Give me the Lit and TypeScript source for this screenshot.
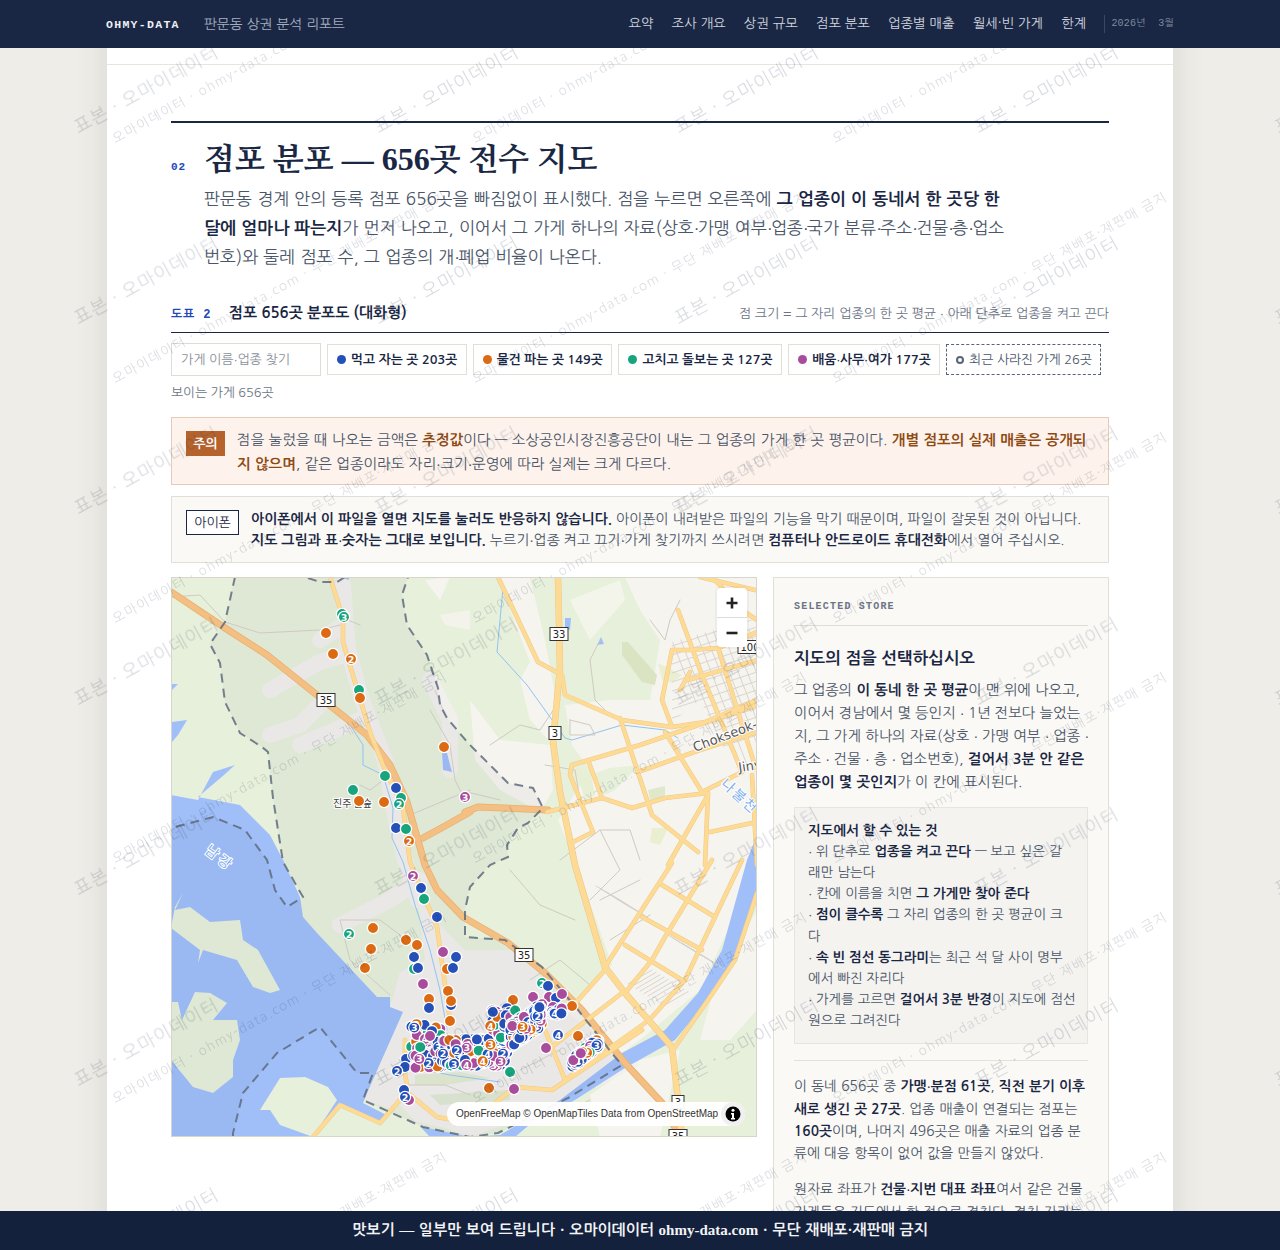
import { LitElement, html, css, svg } from "lit";
import { customElement } from "lit/decorators.js";

type P = number[];
const d = (p: P) => {
  let s = "";
  for (let i = 0; i < p.length; i += 2) s += (i ? "L" : "M") + p[i] + " " + p[i + 1] + " ";
  return s;
};

const boundaryFill: P = [235,577,225,622,210,644,220,663,225,702,240,733,262,747,268,752,273,798,283,862,303,897,287,907,275,890,267,860,245,830,213,817,171,828,171,1137,233,1137,233,1133,243,1093,277,1053,320,1027,357,1073,373,1073,363,1100,423,1127,470,1137,498,1133,568,1098,622,1065,615,1057,578,1010,542,967,505,940,465,937,465,910,470,887,490,865,508,857,507,845,518,828,528,823,543,808,533,788,518,785,508,783,468,743,447,718,440,705,438,688,427,655,407,625,402,595,408,577];
const boundaryLines: P[] = [
  [235,577,225,622,210,644,220,663,225,702,240,733,262,747,268,752,273,798,283,862,303,897,287,907,275,890,267,860,245,830,213,817,171,828],
  [233,1137,233,1133,243,1093,277,1053,320,1027,357,1073,373,1073,363,1100,423,1127,470,1137,498,1133,568,1098,622,1065,615,1057,578,1010,542,967,505,940,465,937,465,910,470,887,490,865,508,857,507,845,518,828,528,823,543,808,533,788,518,785,508,783,468,743,447,718,440,705,438,688,427,655,407,625,402,595,408,577],
  [308,578,320,582,337,582,345,577],
];
const water: P[] = [
  [171,795,198,800,213,772,235,765,224,775,198,797,240,805,270,835,283,860,300,897,303,917,317,933,333,950,377,997,390,997,390,1007,403,1012,367,1093,363,1103,400,1122,470,1137,171,1137],
  [470,1137,500,1135,560,1100,622,1053,665,1030,698,993,722,950,747,860,757,835,757,895,735,960,708,1000,675,1040,625,1068,575,1100,535,1120,515,1137],
  [172,684,178,684,172,690],[172,722,187,720,178,735,172,742],
  [565,618,571,618,570,630,565,628],[597,645,601,637,604,644],[442,752,447,753,452,772,443,770],
  [342,577,350,577,348,580],
];
const islands: P[] = [
  [171,928,175,907,183,893,175,910,190,907,210,922,240,920,243,940,258,950,280,990,270,993,253,987,237,960,203,950,198,963,200,950,171,928],
  [171,1002,178,1002,182,1020,195,992,210,993,227,1003,213,1020,237,1020,240,1040,233,1060,233,1077,213,1093,193,1087,171,1060],
  [260,1110,280,1078,305,1077,328,1087,337,1100,313,1137,280,1125,270,1110],
  [313,1137,340,1105,380,1123,400,1105,430,1137],
];
const urbanLight: P[] = [
  [625,577,757,577,757,850,735,915,700,990,640,1040,590,1075,552,1088,540,1040,612,965,575,860,558,820,590,770,572,745,565,705,610,700,650,700,660,640,640,610],
  [498,578,530,578,545,640,556,700,553,745,530,720,520,680,530,662],
  [470,700,500,740,550,745,553,790,540,812,500,790,475,760],
  [590,1095,640,1060,680,1050,660,1137,600,1137],
  [715,985,757,910,757,1010,730,1040,700,1040],
];
const urbanGrey: P[] = [
  [392,1000,400,972,425,960,418,900,440,925,465,950,520,950,570,1015,640,1065,560,1105,470,1137,410,1115,363,1100],
];
const greyWide: P[] = [
  [343,585,348,650,362,700,385,760,396,820,405,860,418,900],
  [320,640,343,625],[270,690,320,662,345,655],[270,735,300,725,325,700],[360,720,300,745],
  [450,770,450,720,430,680],[420,880,390,900,340,925],
  [410,1112,470,1125],
];
const motor: P[] = [
  [171,592,225,628,267,655,317,695,367,735,390,765,407,802,425,865,437,890,463,917,508,943,545,973,582,1010,625,1063,662,1103,680,1137],
  [470,812,445,826,423,838],[465,812,478,807,548,810],
];
const trunk: P[] = [
  [498,577,538,662,562,675,565,695,622,720,672,727,705,722,757,700],
  [330,577,343,618,343,642,370,732,383,765,403,808,410,862,437,927,450,1020],
  [405,1040,405,1073,408,1093,437,1117,470,1123,515,1087,552,1090,642,1030],
  [313,1137,340,1105,380,1123,400,1100],
  [572,765,640,745,757,705],[638,772,700,750,757,732],[620,718,652,815,698,852],[665,732,702,792,742,772],
  [572,765,570,775,593,832,573,842],[588,760,602,798],[547,812,602,798,632,808,665,798,708,793],
  [708,793,705,865],[710,832,752,823],[708,795,668,865],[752,775,757,865],[678,610,702,675,742,772],[718,648,757,772],
  [672,650,662,700,672,727],[672,650,690,650,718,648,757,632],[688,680,757,660],[690,672,680,690],
  [672,863,605,967],[712,860,665,937,652,960,625,993],[742,860,715,917,685,980,652,1017],[662,885,715,917],[642,917,702,950],[625,945,682,980],
  [605,970,572,1007],[622,993,548,1050],[645,1023,565,1080],[545,1030,565,1080],[757,893,735,960,708,1000,675,1047],
  [700,577,755,590],[712,577,745,612,757,620],
];
const minor: P[] = [
  [172,597,200,595,225,622,260,633,320,630,340,625],[343,618,360,625],[445,715,435,690],[430,710,450,745,455,780,465,800],
  [390,775,370,790,360,785],[467,792,500,800],[410,815,470,790],[490,745,520,725,540,730,560,700],
  [545,765,575,770,580,800],[680,600,670,620,665,640,650,620],[600,640,590,660,595,700,610,715],
  [570,720,590,725,595,735,570,735,570,720],[560,860,600,830,620,870,590,900],[510,870,540,905,575,920],
  [600,900,640,880],[610,940,650,915],[590,985,560,960,530,980],[420,950,380,920,340,920,350,960,390,995],
  [520,1070,560,1050],[500,1110,540,1125,590,1100],[400,1085,445,1085,470,1095],[600,830,630,830,640,860],
];
const streams: P[] = [
  [503,588,497,652,527,685,565,738,572,740,622,725,665,730,678,738],
  [350,725,363,745,363,765,383,775,393,808,392,838,403,862,415,905,430,950,440,990,447,1030],
  [410,1050,425,1070,450,1075,500,1082],
];

const shields: [number, number, string][] = [[326,700,"35"],[559,634,"33"],[555,733,"3"],[524,955,"35"],[750,647,"100"],[678,1102,"3"],[678,1136,"35"]];

type Dot = [number, number, string, string?];
const COL: Record<string, string> = { b: "#2450b8", o: "#dc6a12", g: "#18a47c", p: "#a94c9c" };
const singles: Dot[] = [
  [342,614,"g"],[344,617,"g","3"],[326,633,"o"],[333,654,"o"],[351,659,"o","2"],[359,690,"g"],[360,698,"o"],[444,747,"o"],[385,776,"g"],[396,788,"b"],[401,798,"g"],[399,804,"g","2"],[353,790,"g"],[359,801,"o"],[384,802,"o"],[465,797,"p","3"],[396,828,"b"],[406,829,"g"],[409,841,"o","2"],
  [413,876,"p","2"],[421,888,"b"],[424,899,"g"],[437,917,"b"],[349,934,"g","2"],[373,928,"o"],[371,949,"o"],[365,968,"o"],[406,940,"o"],[417,945,"o"],[443,952,"p"],[456,957,"b"],[414,957,"b"],[447,969,"o"],[453,968,"b"],[414,969,"g"],[418,968,"b"],[423,984,"p"],[448,991,"o"],[451,1005,"b"],[451,1001,"o"],[429,999,"o"],[429,1008,"b"],[450,1021,"o"],
  [542,983,"g","2"],[548,986,"b"],[533,997,"p"],[513,1000,"o"],[549,997,"p"],[556,998,"b"],[562,994,"p"],[553,1007,"p"],[572,1006,"o"],[558,1035,"b","4"],[578,1036,"o"],[546,1048,"p"],[510,1072,"g"],[489,1088,"o"],[514,1089,"p"],
  [406,1059,"b"],[405,1067,"b"],[397,1071,"b","2"],[409,1100,"p"],[404,1090,"b"],[405,1097,"b","2"],
];
const keys = ["b","o","g","p","b","p","b"];
function cluster(seed: number, n: number, lab: number, f: (a: number, b: number) => [number, number]): Dot[] {
  let s = seed;
  const r = () => {
    s = (s + 0x6d2b79f5) | 0;
    let t = Math.imul(s ^ (s >>> 15), 1 | s);
    t = (t + Math.imul(t ^ (t >>> 7), 61 | t)) ^ t;
    return ((t ^ (t >>> 14)) >>> 0) / 4294967296;
  };
  const out: Dot[] = [];
  for (let i = 0; i < n; i++) {
    const [x, y] = f(r(), r());
    const k = keys[Math.floor(r() * keys.length)];
    const l = r() < lab ? String(2 + Math.floor(r() * 3)) : undefined;
    out.push([Math.round(x * 10) / 10, Math.round(y * 10) / 10, k, l]);
  }
  return out;
}
const dots: Dot[] = [
  ...singles,
  ...cluster(7, 60, 0.35, (a, b) => [411 + a * 32, 1024 + b * 44]),
  ...cluster(13, 120, 0.5, (a, b) => [443 + a * 66, 1038 + b * 28]),
  ...cluster(29, 40, 0.4, (a, b) => [490 + a * 26, 1008 + b * 30]),
  ...cluster(41, 220, 0.85, (a, b) => [510 + a * 32, 1036 - a * 22 + (b - 0.5) * 24]),
  ...cluster(53, 12, 0.5, (a, b) => [551 + a * 12, 1008 + b * 7]),
  ...cluster(61, 90, 0.7, (a, b) => [572 + a * 27, 1063 - a * 21 + (b - 0.5) * 11]),
];

function hatch(): P[] {
  const out: P[] = [];
  for (let i = 0; i < 14; i++) { const o = i * 9; out.push([660, 650 + o, 757, 618 + o]); }
  for (let i = 0; i < 12; i++) { const o = i * 9; out.push([668 + o, 630, 722 + o, 770]); }
  return out;
}
function hatch2(): P[] {
  const out: P[] = [];
  for (let i = 0; i < 8; i++) out.push([596 + i * 4, 886 + i * 2.5, 620 + i * 4, 900 + i * 2.5]);
  for (let i = 0; i < 9; i++) out.push([668 + i * 3.6, 935 + i * 2.2, 695 + i * 3.6, 951 + i * 2.2]);
  for (let i = 0; i < 10; i++) out.push([628 + i * 4, 992 + i * 2.4 - 8, 652 + i * 4, 978 + i * 2.4 - 8]);
  return out;
}

@customElement("store-map")
class StoreMap extends LitElement {
  static styles = css`
    :host { display: block; position: relative; width: 586px; height: 560px; box-sizing: border-box; border: 1px solid #d8d5cb; overflow: hidden; flex: none; word-spacing: 0; }
    svg.map { display: block; width: 584px; height: 558px; }
    .shield { fill: #fff; stroke: #333; stroke-width: 1; }
    .shield-t { font: 10px "DejaVu Sans", sans-serif; fill: #222; text-anchor: middle; dominant-baseline: central; }
    .lbl { font: 10px "Nanum Gothic", "Noto Sans CJK KR", sans-serif; fill: #444; paint-order: stroke; stroke: #fff; stroke-width: 2px; }
    .lbl-en { font: 13px "DejaVu Sans", sans-serif; fill: #555; paint-order: stroke; stroke: #fff; stroke-width: 2px; }
    .lbl-w { font: 14px "Nanum Gothic", "Noto Sans CJK KR", sans-serif; fill: #7fb0f0; paint-order: stroke; stroke: #fff; stroke-width: 2px; }
    .num { font: 700 9.500px "DejaVu Sans", sans-serif; fill: #fff; text-anchor: middle; dominant-baseline: central; }
    .zoom { position: absolute; top: 10px; right: 9px; width: 30px; height: 59px; background: #fff; border-radius: 4px; box-shadow: 0 0 0 2px rgba(0,0,0,.03); display: flex; flex-direction: column; }
    .zoom div { flex: 1; display: flex; align-items: center; justify-content: center; }
    .zoom div + div { border-top: 1px solid #ddd; }
    .attr { position: absolute; right: 11px; bottom: 10px; height: 24px; width: 298px; box-sizing: border-box; padding: 0 38px 0 9px; background: rgba(255,255,255,.95); border-radius: 12px; font: 10px/24px "Liberation Sans", sans-serif; color: #333; white-space: nowrap; }
    .info { position: absolute; right: 0; top: 0; width: 24px; height: 24px; border-radius: 50%; background: #f0f0f0; display: flex; align-items: center; justify-content: center; }
  `;
  render() {
    const line = (p: P, c: string, w: number) => svg`<path d=${d(p)} fill="none" stroke=${c} stroke-width=${w} stroke-linejoin="round" stroke-linecap="round"/>`;
    const fill = (p: P, c: string) => svg`<path d=${d(p) + "Z"} fill=${c}/>`;
    const main33: P = [558,577,560,668,553,742,560,792,575,865,605,967,625,993,672,1047,678,1100,682,1137];
    return html`
      <svg class="map" viewBox="172 578 584 558">
        <defs><clipPath id="dt"><path d="M672 642 L757 618 L757 772 L737 775 L700 700 L672 722 Z"/></clipPath></defs>
        <rect x="171" y="577" width="586" height="560" fill="#e7f0db"/>
        ${urbanLight.map((p) => fill(p, "#f6f4ef"))}
        ${fill([622,642,628,642,657,675,655,685,642,682,622,655], "#dbe4c2")}
        ${fill([658,663,682,675,672,683,662,680], "#e9efd0")}
        ${fill([648,790,665,786,665,798,650,800], "#e0e8cb")}
        ${fill([652,828,668,828,660,845,650,842], "#e9efd0")}
        ${fill([575,768,590,770,595,795,585,800], "#e7efd4")}
        ${fill([590,775,610,768,640,765,615,790,605,795], "#e7f0db")}
        ${fill([425,580,450,577,440,600], "#f6f4ef")}
        ${fill([440,615,470,610,470,630,445,625], "#f3f3ec")}
        ${fill([570,600,620,580,625,600,590,640], "#f3f5ea")}
        ${urbanGrey.map((p) => fill(p, "#f2f0ed"))}
        ${greyWide.map((p) => line(p, "#f2f0ed", 16))}
        ${water.map((p) => fill(p, "#a0bff9"))}
        ${islands.map((p) => fill(p, "#e7f0db"))}
        ${fill([430,1095,510,1090,510,1100,440,1105], "#dfe9d3")}
        ${fill([415,1075,460,1072,490,1078,445,1085,415,1085], "#e3ebd2")}
        <path d=${d(boundaryFill) + "Z"} fill="#1a2744" fill-opacity=".04"/>
        ${streams.map((p) => line(p, "#8fc3f2", 1))}
        ${minor.map((p) => line(p, "#cfcac3", 1))}
        <g clip-path="url(#dt)">${hatch().map((p) => line(p, "#d6d1c9", 0.9))}</g>
        ${hatch2().map((p) => line(p, "#d6d1c9", 0.9))}
        ${motor.map((p) => line(p, "#e8b070", 7))}
        ${motor.map((p) => line(p, "#f4bf82", 5.5))}
        ${line(main33, "#efc582", 6.5)}
        ${trunk.map((p) => line(p, "#f0c888", 4.6))}
        ${trunk.map((p) => line(p, "#fedb95", 3.6))}
        ${line(main33, "#fedb95", 5.5)}
        ${boundaryLines.map((p) => svg`<path d=${d(p)} fill="none" stroke="#5f6b7e" stroke-width="2" stroke-dasharray="9 6" stroke-opacity=".85"/>`)}
        <text class="lbl-w" x="204" y="852" transform="rotate(38 204 852)" letter-spacing="3">남강</text>
        <text class="lbl-w" x="720" y="785" transform="rotate(42 720 785)" font-size="13" letter-spacing="2">나불천</text>
        <text class="lbl" x="333" y="807">진주 솔숲 </text>
        <text class="lbl-en" x="695" y="752" transform="rotate(-21 695 752)">Chokseok-ro</text>
        <text class="lbl-en" x="739" y="772" transform="rotate(-8 739 772)">Jiny</text>
        ${shields.map(([x, y, t]) => {
          const w = t.length > 2 ? 24 : t.length > 1 ? 18 : 12;
          return svg`<rect class="shield" x=${x - w / 2} y=${y - 6.5} width=${w} height="13"/><text class="shield-t" x=${x} y=${y}>${t}</text>`;
        })}
        ${dots.map(([x, y, k, l]) => svg`<circle cx=${x} cy=${y} r="5.6" fill=${COL[k]} stroke="#fff" stroke-width="1.3"/>${l ? svg`<text class="num" x=${x} y=${y}>${l}</text>` : ""}`)}
      </svg>
      <div class="zoom">
        <div><svg width="14" height="14" viewBox="0 0 14 14"><path d="M1.5 7h11M7 1.500v11" stroke="#222" stroke-width="2.600"/></svg></div>
        <div><svg width="14" height="14" viewBox="0 0 14 14"><path d="M1.500 7h11" stroke="#222" stroke-width="2.600"/></svg></div>
      </div>
      <div class="attr">OpenFreeMap © OpenMapTiles Data from OpenStreetMap
        <span class="info"><svg width="16" height="16" viewBox="0 0 16 16"><circle cx="8" cy="8" r="7.500" fill="#000"/><circle cx="8" cy="4.300" r="1.500" fill="#fff"/><path d="M6 7h3v5h1v1.500H6V12h1V8.500H6z" fill="#fff"/></svg></span>
      </div>
    `;
  }
}

const BODY = css`"Liberation Serif", "Nanum Gothic", "NanumGothic", "Noto Sans CJK KR", serif`;
const SANS = css`"Nanum Gothic", "NanumGothic", "Liberation Sans", "Noto Sans CJK KR", sans-serif`;
const SERIF = css`"Liberation Serif", "Nanum Myeongjo", "NanumMyeongjo", "Noto Serif CJK KR", serif`;
const MONO = css`"Liberation Mono", "Nanum Gothic", "NanumGothic", "Noto Sans CJK KR", monospace`;

const M = html`<i class="m">·</i>`;

@customElement("app-root")
class AppRoot extends LitElement {
  static styles = css`
    :host { display: block; height: 1250px; overflow: hidden; background: #eeede8; font-family: ${SANS}; color: #4a5568; }
    i.m { font-family: "Liberation Sans", sans-serif; font-weight: 400; font-style: normal; letter-spacing: -0.500px; }
    .nav { position: fixed; left: 0; right: 0; top: 0; height: 48px; background: #1a2744; z-index: 10; display: flex; justify-content: center; }
    .nav-in { width: 1068px; display: flex; align-items: center; }
    .brand { font: 700 11.500px ${MONO}; letter-spacing: 1.300px; color: #eef0f4; margin-right: 24px; }
    .sub { font-size: 13.800px; color: #a6afc0; }
    .links { margin-left: auto; display: flex; gap: 18px; font-size: 13.400px; color: #d0d5df; }
    .date { margin-left: 18px; padding-left: 6px; border-left: 1px solid #3a4763; font: 10px/18px ${MONO}; color: #7f8aa0; letter-spacing: 0.200px; white-space: pre; }
    .foot { position: fixed; left: 0; right: 0; bottom: 0; height: 39px; background: #14213d; z-index: 10; color: #f2f3f5; display: flex; align-items: center; justify-content: center; font: 700 15px ${BODY}; word-spacing: 0.900px; }
    .sheet { width: 1066px; margin: 0 auto; background: #fff; box-shadow: 0 0 30px rgba(60,55,40,.12); box-sizing: border-box; padding: 48px 0 80px; }
    .stub { height: 16px; border-bottom: 1px solid #e8e5de; }
    .body { padding: 56px 64px 0; }
    .rule { height: 2px; background: #1a2744; }
    .h { display: flex; align-items: baseline; margin-top: 14px; }
    .no { width: 33px; font: 700 11px ${MONO}; color: #2348b8; letter-spacing: 1px; }
    h2 { margin: 0; font: 800 32px/44px ${SERIF}; color: #1a2744; }
    .lede { margin: 4px 0 0 33px; font-size: 17px; line-height: 28px; white-space: nowrap; word-spacing: 0.450px; }
    .lede i.m { letter-spacing: -1.600px; }
    b { color: #1a2744; font-weight: 700; }
    .fig { display: flex; align-items: baseline; margin-top: 33px; padding-bottom: 10px; border-bottom: 1px solid #1a2744; }
    .fig-no { width: 58px; font: 700 12px ${MONO}; color: #2348b8; letter-spacing: 0.800px; }
    .fig-t { font-size: 15px; font-weight: 700; color: #1a2744; }
    .fig-n { margin-left: auto; font-size: 13px; color: #6b7484; word-spacing: 0.100px; }
    .tools { display: flex; gap: 6px; align-items: center; margin-top: 10px; }
    .search { width: 150px; flex: none; height: 33px; box-sizing: border-box; border: 1px solid #dfdcd3; padding: 0 9px; font-size: 13px; line-height: 31px; color: #8a8f99; background: #fff; }
    .chip { height: 31px; box-sizing: border-box; border: 1px solid #e2dfd6; display: flex; align-items: center; padding: 0 8.500px 0 9px; gap: 5px; font-size: 12.800px; font-weight: 600; color: #1a2744; background: #fff; white-space: nowrap; flex: none; }
    .chip.dash { border: 1px dashed #5a6478; font-weight: 400; color: #4a5568; }
    .dot { width: 9px; height: 9px; border-radius: 50%; flex: none; }
    .ring { width: 8px; height: 8px; border-radius: 50%; box-sizing: border-box; border: 2px solid #5a6478; }
    .count { margin-top: 9px; font-size: 12.800px; color: #6b7484; line-height: 16px; }
    .note { display: flex; box-sizing: border-box; white-space: nowrap; }
    .warn { margin-top: 16px; height: 68px; padding: 11px 14px; gap: 12px; background: #fdf3ec; border: 1px solid #e6ccb6; font-size: 14.500px; line-height: 23.500px; word-spacing: 0.300px; }
    .warn b { color: #8f4a14; }
    .warn .badge { background: #b5622c; color: #fff; font-weight: 700; font-size: 13px; width: 39px; height: 25px; line-height: 25px; text-align: center; flex: none; margin-top: 2px; }
    .ios { margin-top: 11px; height: 67px; padding: 12px 14px; gap: 12px; background: #faf9f5; border: 1px solid #e2dfd6; font-size: 14px; line-height: 21px; word-spacing: 0.050px; }
    .ios .badge { background: #fff; color: #1a2744; border: 1px solid #1a2744; font-size: 13px; width: 53px; height: 25px; box-sizing: border-box; line-height: 23px; text-align: center; flex: none; margin-top: 1px; }
    .cols { display: flex; gap: 16px; margin-top: 14px; align-items: flex-start; }
    .panel { width: 336px; box-sizing: border-box; padding: 21px 20px; background: #faf9f5; border: 1px solid #e2dfd6; flex: none; white-space: nowrap; }
    .eyebrow { font: 700 10px/16px "Liberation Mono", monospace; letter-spacing: 1.200px; color: #6b7484; padding-bottom: 10px; border-bottom: 1px solid #e0ddd4; }
    .panel h3 { margin: 20px 0 0; font-size: 16.600px; line-height: 24px; color: #1a2744; font-weight: 700; }
    .panel p { margin: 9px 0 0; font-size: 14.400px; line-height: 23px; word-spacing: 0.200px; }
    .box { margin-top: 13px; padding: 11.500px 13px; background: #f4f3f0; border: 1px solid #e8e5de; font-size: 13.500px; line-height: 21.200px; word-spacing: 0.100px; }
    .box .l { display: block; }
    hr { border: 0; border-top: 1px solid #e4e1d8; margin: 16px 0 0; }
    .panel p.sm { font-size: 13.800px; line-height: 22px; margin-top: 14px; word-spacing: 0.300px; }
    .wm { position: fixed; inset: 0; z-index: 5; pointer-events: none; overflow: hidden; }
    .wm span { position: absolute; white-space: nowrap; transform: translate(-50%, -50%) rotate(-29deg); color: rgba(26,39,68,.16); }
    .wm .big { font-size: 18px; letter-spacing: 1px; }
    .wm .small { font-size: 13px; letter-spacing: 1.500px; }
  `;
  render() {
    const big: [number, number][] = [];
    for (let j = -1; j < 7; j++) for (let i = 0; i < 5; i++) big.push([147 + 300 * i, 90 + 190.500 * j]);
    const small: [number, number][] = [];
    for (let j = 0; j < 7; j++) for (let i = 0; i < 3; i++) small.push([280 + 360 * i, 48 + 240 * j]);
    return html`
      <div class="nav"><div class="nav-in">
        <span class="brand">OHMY-DATA</span><span class="sub">판문동 상권 분석 리포트</span>
        <div class="links"><span>요약</span><span>조사 개요</span><span>상권 규모</span><span>점포 분포</span><span>업종별 매출</span><span>월세·빈 가게</span><span>한계</span></div>
        <span class="date">2026년  3월</span>
      </div></div>
      <div class="sheet">
        <div class="stub"></div>
        <div class="body">
          <div class="rule"></div>
          <div class="h"><span class="no">02</span><h2>점포 분포 — 656곳 전수 지도</h2></div>
          <p class="lede">판문동 경계 안의 등록 점포 656곳을 빠짐없이 표시했다. 점을 누르면 오른쪽에 <b>그 업종이 이 동네서 한 곳당 한<br>달에 얼마나 파는지</b>가 먼저 나오고, 이어서 그 가게 하나의 자료(상호${M}가맹 여부${M}업종${M}국가 분류${M}주소${M}건물${M}층${M}업소<br>번호)와 둘레 점포 수, 그 업종의 개${M}폐업 비율이 나온다.</p>
          <div class="fig"><span class="fig-no">도표 2</span><span class="fig-t">점포 656곳 분포도 (대화형)</span><span class="fig-n">점 크기 = 그 자리 업종의 한 곳 평균 ${M} 아래 단추로 업종을 켜고 끈다</span></div>
          <div class="tools">
            <div class="search">가게 이름${M}업종 찾기</div>
            <div class="chip"><i class="dot" style="background:#2450b8"></i><span>먹고 자는 곳 203곳</span></div>
            <div class="chip"><i class="dot" style="background:#dc6a12"></i><span>물건 파는 곳 149곳</span></div>
            <div class="chip"><i class="dot" style="background:#18a47c"></i><span>고치고 돌보는 곳 127곳</span></div>
            <div class="chip"><i class="dot" style="background:#a94c9c"></i><span>배움${M}사무${M}여가 177곳</span></div>
            <div class="chip dash"><i class="ring"></i><span>최근 사라진 가게 26곳</span></div>
          </div>
          <div class="count">보이는 가게 656곳</div>
          <div class="note warn"><span class="badge">주의</span><div>점을 눌렀을 때 나오는 금액은 <b>추정값</b>이다 — 소상공인시장진흥공단이 내는 그 업종의 가게 한 곳 평균이다. <b>개별 점포의 실제 매출은 공개되<br>지 않으며</b>, 같은 업종이라도 자리${M}크기${M}운영에 따라 실제는 크게 다르다.</div></div>
          <div class="note ios"><span class="badge">아이폰</span><div><b>아이폰에서 이 파일을 열면 지도를 눌러도 반응하지 않습니다.</b> 아이폰이 내려받은 파일의 기능을 막기 때문이며, 파일이 잘못된 것이 아닙니다.<br><b>지도 그림과 표${M}숫자는 그대로 보입니다.</b> 누르기${M}업종 켜고 끄기${M}가게 찾기까지 쓰시려면 <b>컴퓨터나 안드로이드 휴대전화</b>에서 열어 주십시오.</div></div>
          <div class="cols">
            <store-map></store-map>
            <div class="panel">
              <div class="eyebrow">SELECTED STORE</div>
              <h3>지도의 점을 선택하십시오</h3>
              <p>그 업종의 <b>이 동네 한 곳 평균</b>이 맨 위에 나오고,<br>이어서 경남에서 몇 등인지 ${M} 1년 전보다 늘었는<br>지, 그 가게 하나의 자료(상호 ${M} 가맹 여부 ${M} 업종 ${M}<br>주소 ${M} 건물 ${M} 층 ${M} 업소번호), <b>걸어서 3분 안 같은<br>업종이 몇 곳인지</b>가 이 칸에 표시된다.</p>
              <div class="box">
                <span class="l"><b>지도에서 할 수 있는 것</b></span>
                <span class="l">${M} 위 단추로 <b>업종을 켜고 끈다</b> — 보고 싶은 갈<br>래만 남는다</span>
                <span class="l">${M} 칸에 이름을 치면 <b>그 가게만 찾아 준다</b></span>
                <span class="l">${M} <b>점이 클수록</b> 그 자리 업종의 한 곳 평균이 크<br>다</span>
                <span class="l">${M} <b>속 빈 점선 동그라미</b>는 최근 석 달 사이 명부<br>에서 빠진 자리다</span>
                <span class="l">${M} 가게를 고르면 <b>걸어서 3분 반경</b>이 지도에 점선<br>원으로 그려진다</span>
              </div>
              <hr />
              <p class="sm">이 동네 656곳 중 <b>가맹${M}분점 61곳</b>, <b>직전 분기 이후<br>새로 생긴 곳 27곳</b>. 업종 매출이 연결되는 점포는<br><b>160곳</b>이며, 나머지 496곳은 매출 자료의 업종 분<br>류에 대응 항목이 없어 값을 만들지 않았다.</p>
              <p class="sm">원자료 좌표가 <b>건물${M}지번 대표 좌표</b>여서 같은 건물<br>가게들은 지도에서 한 점으로 겹친다. 겹친 자리는<br>숫자로 표시했다.</p>
            </div>
          </div>
        </div>
      </div>
      <div class="wm">
        ${big.map(([x, y]) => html`<span class="big" style="left:${x}px;top:${y}px">표본 · 오마이데이터</span>`)}
        ${small.map(([x, y]) => html`<span class="small" style="left:${x}px;top:${y}px">오마이데이터 · ohmy-data.com · 무단 재배포·재판매 금지</span>`)}
      </div>
      <div class="foot">맛보기 — 일부만 보여 드립니다 · 오마이데이터 ohmy-data.com · 무단 재배포·재판매 금지</div>
    `;
  }
}
